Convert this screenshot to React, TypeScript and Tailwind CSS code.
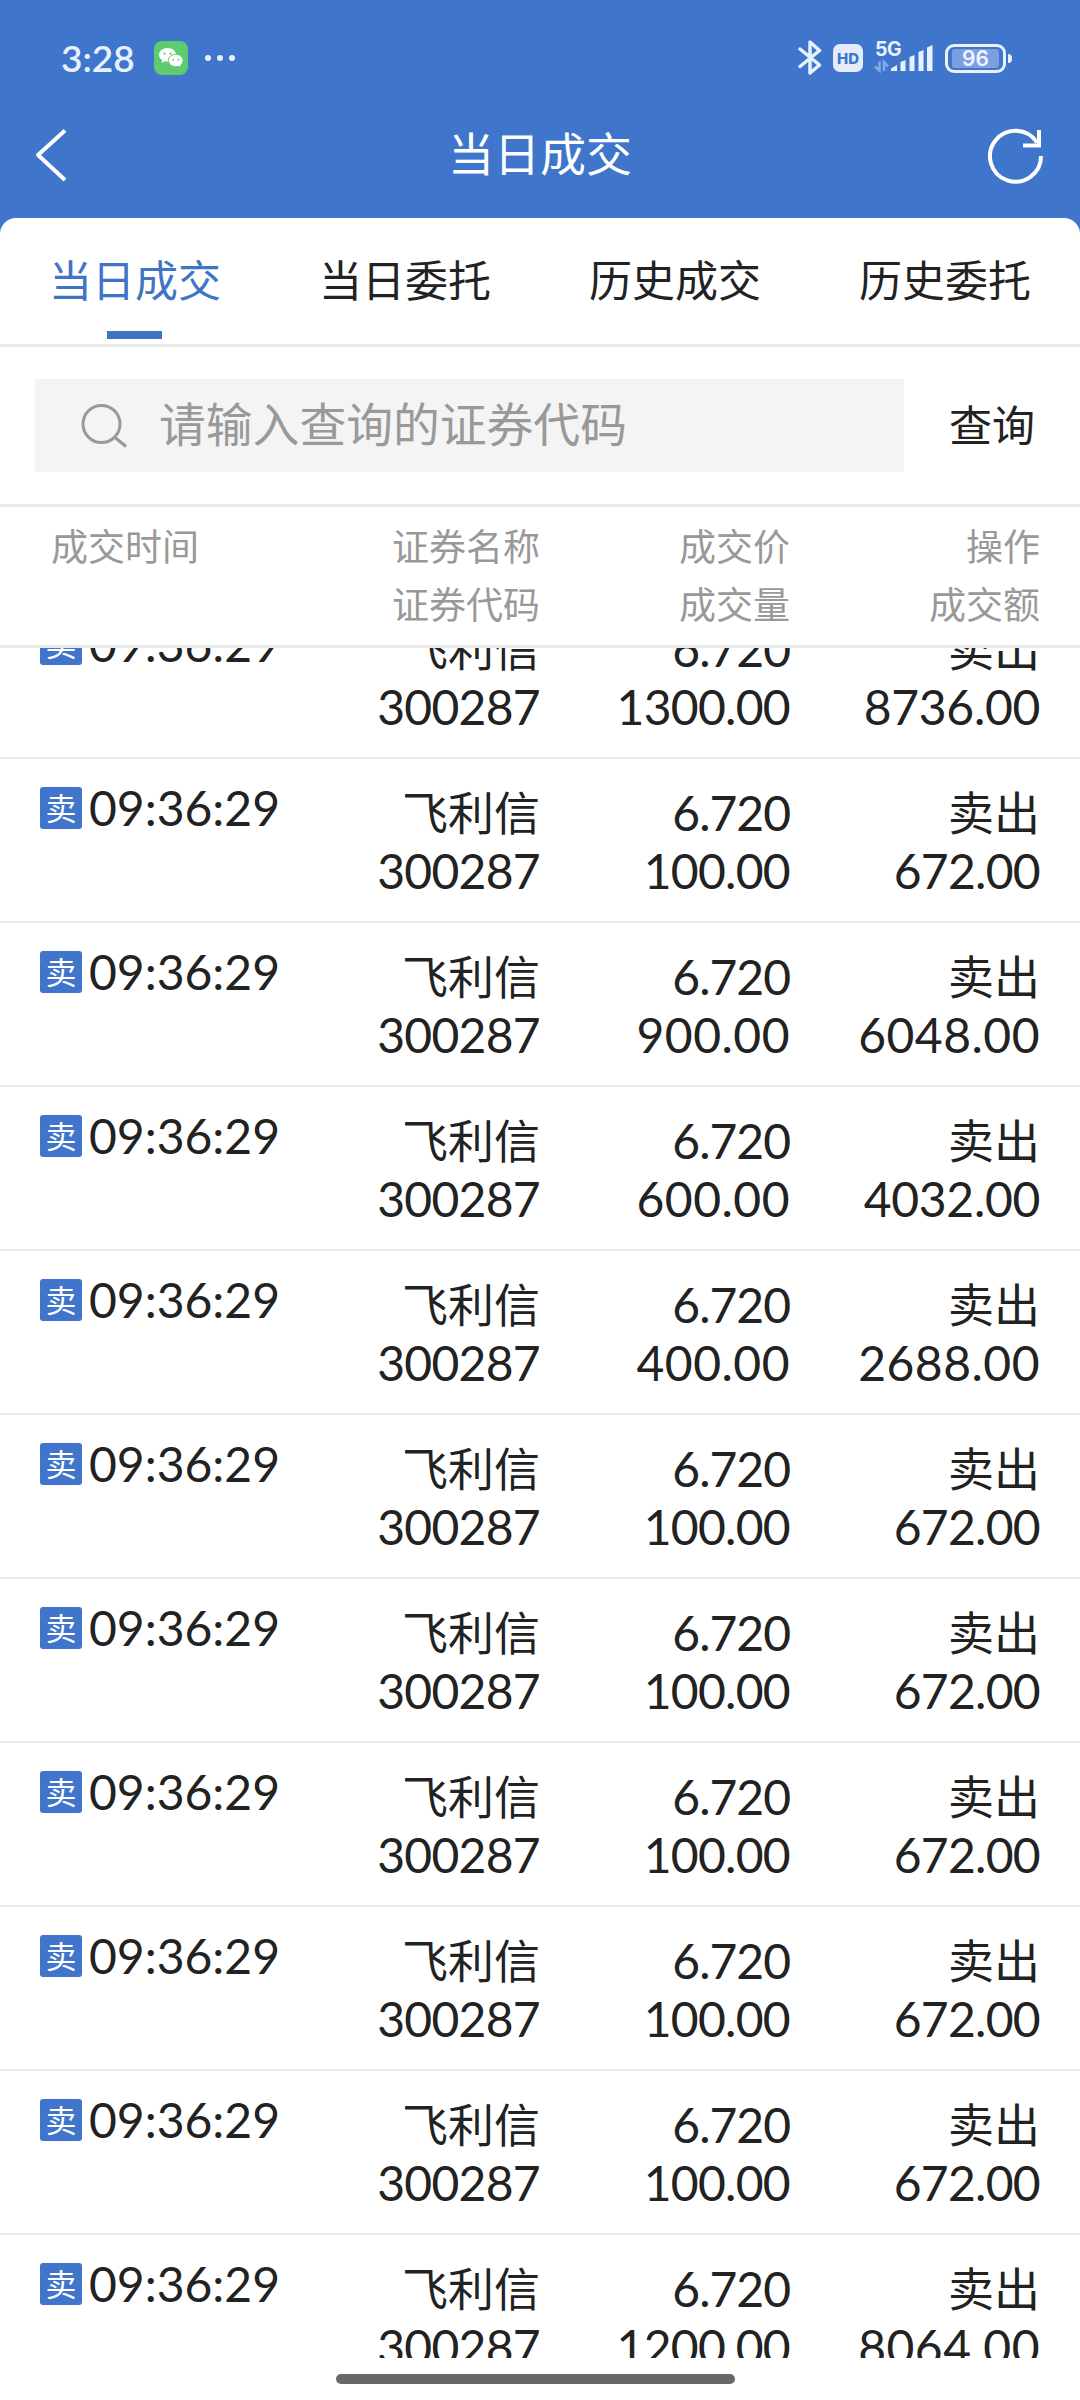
type Trade = { volume: string; volumeTracking: string; amount: string; amountTracking: string };

const round = (volume: string, volumeTracking: string, amount: string, amountTracking: string): Trade => ({
  volume,
  volumeTracking,
  amount,
  amountTracking,
});

const tight = 'tracking-[-0.7px]';
const snug = 'tracking-[-0.3px]';
const loose = 'tracking-[0.5px]';

const trades: Trade[] = [
  round('1300.00', tight, '8736.00', snug),
  round('100.00', tight, '672.00', tight),
  round('900.00', loose, '6048.00', loose),
  round('600.00', loose, '4032.00', snug),
  round('400.00', loose, '2688.00', loose),
  round('100.00', tight, '672.00', tight),
  round('100.00', tight, '672.00', tight),
  round('100.00', tight, '672.00', tight),
  round('100.00', tight, '672.00', tight),
  round('100.00', tight, '672.00', tight),
  round('1200.00', tight, '8064.00', loose),
];

const tabs = ['当日成交', '当日委托', '历史成交', '历史委托'];

const num = "font-['Lato',sans-serif] text-[48px]";

function StatusBar() {
  return (
    <div className="flex h-[94px] items-start justify-between pl-[61px] pr-[69px] pt-10 text-[#e8f2ff]">
      <div className="flex h-9 items-center">
        <span className="w-[93px] font-['Lato',sans-serif] text-[37px] font-semibold leading-9">3:28</span>
        <svg width="34" height="34" viewBox="0 0 34 34">
          <rect width="34" height="34" rx="8" fill="#5fcb71" />
          <path d="M13.5 7C8.8 7 5 10 5 13.8c0 2.1 1.2 4 3.1 5.200L7.600 22l3-1.700c1 .3 1.900.4 2.900.4 4.700 0 8.500-3 8.500-6.900S18.200 7 13.500 7Z" fill="#fff" />
          <path d="M21.800 13.300c-4.100 0-7.400 2.700-7.400 6.200s3.300 6.200 7.400 6.200c.9 0 1.700-.1 2.500-.4l2.600 1.500-.5-2.600c1.600-1.100 2.700-2.800 2.700-4.700 0-3.500-3.200-6.200-7.300-6.200Z" fill="#fff" stroke="#5fcb71" strokeWidth="1" />
          <g fill="#5fcb71">
            <circle cx="10.500" cy="12.700" r="1.100" />
            <circle cx="16.500" cy="12.700" r="1.100" />
            <circle cx="19.200" cy="18.700" r="0.900" />
            <circle cx="24.300" cy="18.700" r="0.900" />
          </g>
        </svg>
        <div className="ml-[17px] flex gap-1.5">
          <i className="size-1.5 rounded-full bg-current" />
          <i className="size-1.5 rounded-full bg-current" />
          <i className="size-1.5 rounded-full bg-current" />
        </div>
      </div>
      <div className="flex h-9 items-center">
        <svg width="24" height="36" viewBox="0 0 24 36" fill="none" stroke="currentColor" strokeWidth="3.500" strokeLinejoin="round" strokeLinecap="round">
          <path d="M2 9 21.500 25 12 33V2l9.500 8.500L2 26.500" />
        </svg>
        <div className="ml-[11px] flex h-7 w-[30px] items-center justify-center rounded-[7px] bg-[#e3ecfc] font-['Inter',sans-serif] text-[15px] font-extrabold leading-none text-[#3f76cb]">
          HD
        </div>
        <div className="relative ml-[11px] h-9 w-[60px]">
          <span className="absolute left-px top-px font-['Inter',sans-serif] text-[19.500px] font-bold leading-4 tracking-[-0.5px]">5G</span>
          <svg className="absolute inset-0" width="60" height="36" viewBox="0 0 60 36">
            <g fill="none" stroke="#86a9e8" strokeWidth="2.500">
              <path d="M5.500 21.500V30.500L1 26.500M10 31v-9l4 4.500" />
            </g>
            <g fill="currentColor">
              <path d="M17 28.500 23 25v6h-6ZM26.500 22l5-2v11h-5ZM35.500 17l5-2v16h-5ZM44.500 12l5-2v21h-5ZM53 7.500l5.500-2.500v26H53Z" />
            </g>
          </svg>
        </div>
        <div className="ml-[11px] flex h-[29px] w-[61px] shrink-0 items-center justify-center rounded-[9px] border-[3px] border-current">
          <div className="flex h-[19px] w-[47px] items-center justify-center rounded-[3px] bg-[#7d9fdf] font-['Inter',sans-serif] text-[21px] font-semibold leading-none text-[#eef5ff]">
            96
          </div>
        </div>
        <i className="-mr-px ml-0.5 h-[9px] w-[4px] rounded-r-[4px] bg-current" />
      </div>
    </div>
  );
}

function TitleBar() {
  return (
    <div className="flex h-[124px] justify-between pl-[35px] pr-9 pt-[34px]">
      <svg width="32" height="54" viewBox="0 0 32 54" fill="none" stroke="#fff" strokeWidth="4">
        <path d="M30 2.500 3 27l27 25" strokeLinejoin="round" />
      </svg>
      <h1 className="ml-[25px] -mt-1 h-[54px] text-[46px] leading-[54px] text-white">当日成交</h1>
      <svg width="56" height="56" viewBox="0 0 56 56" fill="none" stroke="#fff" strokeWidth="4">
        <path d="M53 28A25.500 25.500 0 1 1 49 14.500M51 2v16M35 17.500h18" />
      </svg>
    </div>
  );
}

function Tabs() {
  return (
    <nav className="grid h-[129px] grid-cols-4 border-b-[3px] border-[#ececec] text-[43px] text-[#222]">
      {tabs.map((tab, i) => (
        <div key={tab} className={i === 0 ? 'flex flex-col items-center text-[#4075c3]' : 'flex flex-col items-center'}>
          <span className="mt-7 leading-[64px]">{tab}</span>
          {i === 0 && <i className="mr-px mt-[21px] h-2 w-[55px] bg-[#4075c3]" />}
        </div>
      ))}
    </nav>
  );
}

function SearchBar() {
  return (
    <div className="flex h-[160px] border-b-[3px] border-[#ececec] pl-[35px] pt-8">
      <div className="flex h-[93px] w-[869px] bg-[#f4f4f4] pl-[46px] text-[#999]">
        <svg className="mt-[23px]" width="46" height="46" viewBox="0 0 46 46" fill="none" stroke="currentColor" strokeWidth="3">
          <circle cx="20.500" cy="22" r="18.500" />
          <path d="m34 35.500 11 9" />
        </svg>
        <span className="ml-8 h-[86px] text-[46.800px] leading-[86px]">请输入查询的证券代码</span>
      </div>
      <button className="ml-[45px] h-[88px] text-[43px] leading-[88px] text-[#222]">查询</button>
    </div>
  );
}

function TableHead() {
  return (
    <div className="grid h-[141px] grid-cols-[300px_240px_250px_250px] border-b-[3px] border-[#ececec] pt-[9px] text-right text-[37px] leading-[58px] text-[#999]">
      <div className="pl-[51px] text-left">成交时间</div>
      <div>证券名称<br />证券代码</div>
      <div>成交价<br />成交量</div>
      <div>操作<br />成交额</div>
    </div>
  );
}

function TradeRow({ trade }: { trade: Trade }) {
  return (
    <div className="grid h-[164px] shrink-0 grid-cols-[300px_240px_250px_250px] border-b-2 border-[#ececec] text-right text-[46px] leading-[58px] text-[#222]">
      <div className="flex pl-10 pt-7">
        <span className="flex size-[42px] justify-center rounded-[3px] bg-[#4075cb] text-[31px] leading-[39px] text-white">卖</span>
        <span className={`${num} ml-[7px] h-[42px] leading-[42px]`}>09:36:29</span>
      </div>
      <div className="pt-[22px]">
        <div className="h-[58px]">飞利信</div>
        <div className={`${num} mt-[3px] h-[58px] tracking-[-0.7px]`}>300287</div>
      </div>
      <div className={`${num} pt-[25px]`}>
        <div className="h-[58px] tracking-[-1px]">6.720</div>
        <div className={`${trade.volumeTracking} h-[58px]`}>{trade.volume}</div>
      </div>
      <div className="pt-[22px]">
        <div className="h-[58px]">卖出</div>
        <div className={`${num} ${trade.amountTracking} mt-[3px] h-[58px]`}>{trade.amount}</div>
      </div>
    </div>
  );
}

export default function App() {
  return (
    <div className="flex h-[2400px] w-[1080px] flex-col overflow-hidden bg-[#3f76cb] font-['Noto_Sans_CJK_SC',sans-serif]">
      <StatusBar />
      <TitleBar />
      <main className="flex h-[2182px] flex-col rounded-t-[16px] bg-white">
        <Tabs />
        <SearchBar />
        <TableHead />
        <section className="flex h-[1710px] flex-col overflow-hidden">
          <div className="-mt-[53px] flex flex-col">
            {trades.map((trade, i) => (
              <TradeRow key={i} trade={trade} />
            ))}
          </div>
        </section>
        <div className="ml-[336px] mt-4 h-2.5 w-[399px] rounded-full bg-[#686868]" />
      </main>
    </div>
  );
}
